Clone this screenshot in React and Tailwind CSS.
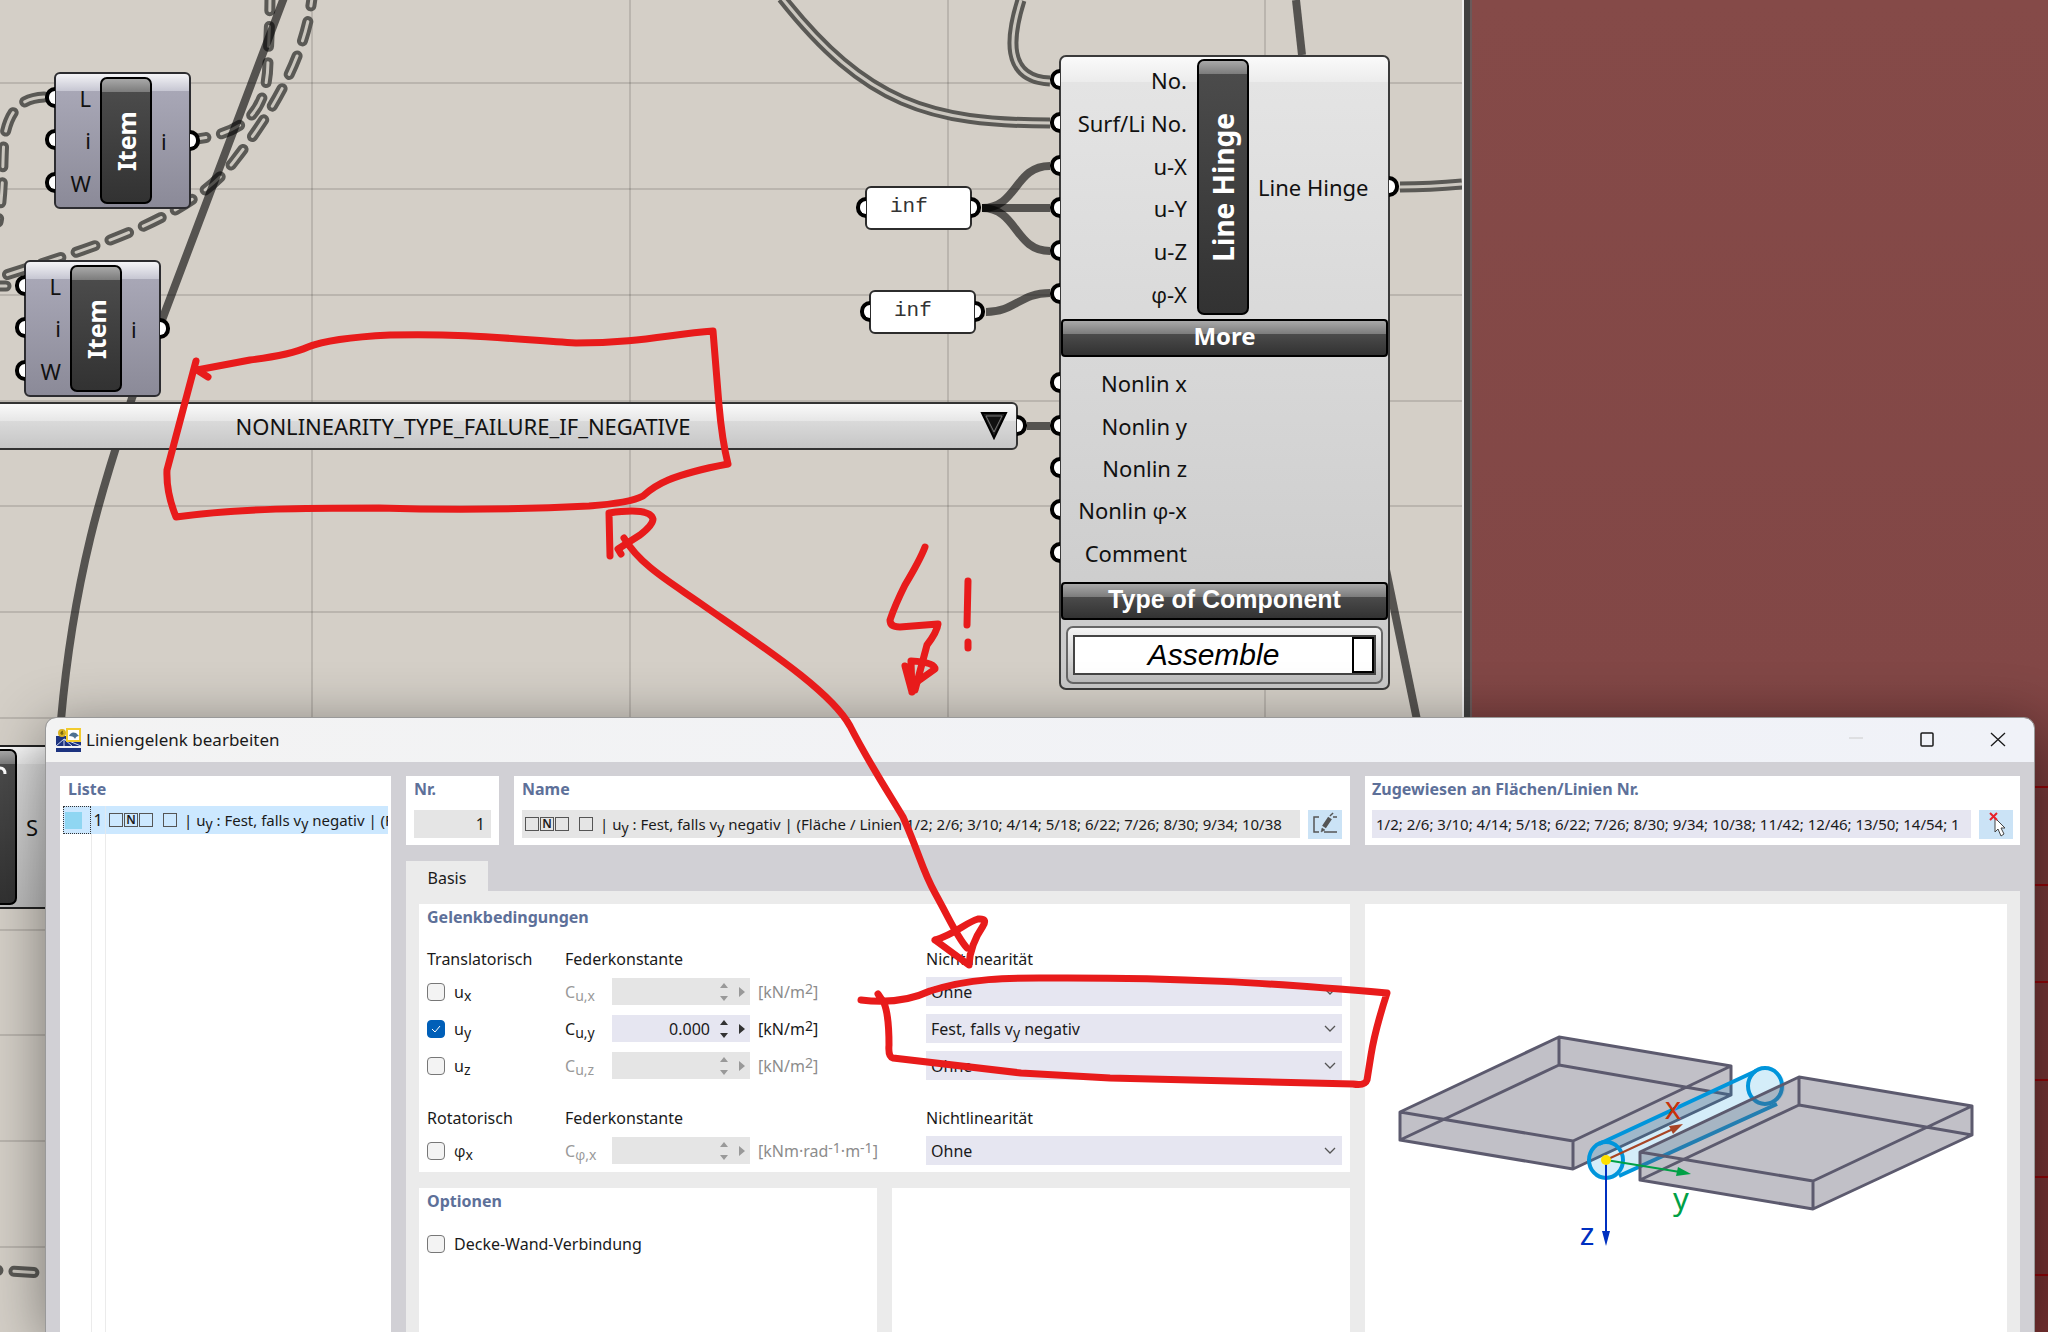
import { useState } from 'react'

const GRID_X = [312, 630, 948, 1265]
const GRID_Y = [83, 189, 295, 401, 506, 612, 718, 824, 930, 1035, 1141, 1247]
const RED_LINES = [786, 884, 981, 1079, 1176, 1274]

const BAR = 'bg-[linear-gradient(180deg,#a8a8a8_0px,#7c7c7c_13px,#4b4b4b_13px,#323232_100%)]'
const GREY = 'bg-[linear-gradient(180deg,#fafafa_0px,#ececec_25px,#e4e4e4_25px,#c9c9c9_100%)]'

// ---------- grasshopper canvas ----------

function Phi() {
  return <span className="font-['Open_Sans',sans-serif]">φ</span>
}

function Port({ side }) {
  const cls = side === 'left'
    ? '-left-[11px] rounded-l-full border-r-0'
    : '-right-[11px] rounded-r-full border-l-0'
  return <span className={`absolute top-1/2 -mt-[11px] h-[21px] w-[10px] border-4 border-black bg-white ${cls}`} />
}

function ItemNode({ className }) {
  return (
    <div className={`absolute flex h-[137px] w-[137px] rounded-[6px] border-2 border-[#2c2c30] bg-[linear-gradient(180deg,#f4f4f7_0px,#c6c6d2_17px,#a8a7b6_17px,#8b8a98_100%)] ${className}`}>
      <div className="flex w-[44px] flex-col py-[3px]">
        {['L', 'i', 'W'].map(p => (
          <div key={p} className="relative flex flex-1 items-center justify-end pr-[9px]">
            <Port side="left" />{p}
          </div>
        ))}
      </div>
      <div className={`my-[3px] flex w-[52px] items-center justify-center rounded-[7px] border-2 border-black ${BAR}`}>
        <span className="rotate-180 text-[25px] font-bold leading-none text-white [writing-mode:vertical-rl]">Item</span>
      </div>
      <div className="relative flex flex-1 items-center pl-[9px]">i<Port side="right" /></div>
    </div>
  )
}

function InfPanel({ className }) {
  return (
    <div className={`absolute flex h-[44px] w-[107px] items-center rounded-[6px] border-2 border-[#2c2c2c] bg-white ${className}`}>
      <Port side="left" />
      <span className="-mt-1 pl-[23px] font-['Liberation_Mono',monospace] text-[21px] text-[#333]">inf</span>
      <Port side="right" />
    </div>
  )
}

function PortRows({ rows, className }) {
  return (
    <div className={`flex flex-col ${className}`}>
      {rows.map((row, i) => (
        <div key={i} className="relative flex flex-1 items-center justify-end">
          <Port side="left" /><span className="whitespace-nowrap">{row}</span>
        </div>
      ))}
    </div>
  )
}

function LineHingeNode() {
  return (
    <div className={`absolute left-[1059px] top-[55px] flex w-[331px] flex-col rounded-[7px] border-2 border-[#3a3a3a] ${GREY}`}>
      <div className="mt-[2px] flex h-[256px]">
        <PortRows rows={['No.', 'Surf/Li No.', 'u-X', 'u-Y', 'u-Z', <><Phi />-X</>]} className="w-[126px]" />
        <div className={`ml-[10px] flex w-[52px] items-center justify-center rounded-[7px] border-2 border-black ${BAR}`}>
          <span className="rotate-180 text-[28px] font-bold leading-none text-white [writing-mode:vertical-rl]">Line Hinge</span>
        </div>
        <div className="relative flex flex-1 items-center pl-[9px]">Line Hinge<Port side="right" /></div>
      </div>
      <div className={`mt-[4px] flex h-[38px] items-center justify-center rounded-[4px] border-2 border-black pb-1 text-[24px] font-bold text-white ${BAR}`}>More</div>
      <PortRows rows={['Nonlin x', 'Nonlin y', 'Nonlin z', <>Nonlin <Phi />-x</>, 'Comment']} className="mt-[5px] h-[212px] w-[126px]" />
      <div className={`mt-[8px] flex h-[38px] items-center justify-center rounded-[4px] border-2 border-black pb-1 font-['Liberation_Sans',sans-serif] text-[25px] font-bold text-white ${BAR}`}>Type of Component</div>
      <div className="mx-[5px] mb-[4px] mt-[6px] rounded-[7px] border-2 border-[#666] bg-[linear-gradient(180deg,#f4f4f4,#bdbdbd)] px-[5px] py-[7px]">
        <button className="flex h-[40px] w-full items-stretch border-2 border-[#444] bg-white font-['Liberation_Sans',sans-serif] text-[30px] italic text-black">
          <span className="flex flex-1 items-center justify-center">Assemble</span>
          <span className="w-[22px] border-2 border-black" />
        </button>
      </div>
    </div>
  )
}

function DoubleWire({ d, dashed }) {
  const dash = dashed ? '20 16' : undefined
  const cap = dashed ? 'round' : 'butt'
  return (
    <>
      <path d={d} stroke="#5a5955" strokeWidth="11" strokeDasharray={dash} strokeLinecap={cap} />
      <path d={d} stroke="#cbc7bf" strokeWidth="3" strokeDasharray={dash} strokeLinecap={cap} />
    </>
  )
}

function Wires() {
  return (
    <svg className="absolute left-0 top-0 h-[1332px] w-[1462px]" viewBox="0 0 1462 1332" fill="none">
      <g stroke="#000" strokeOpacity="0.12" strokeWidth="2">
        {GRID_X.map(x => <path key={x} d={`M${x} 0V1332`} />)}
        {GRID_Y.map(y => <path key={y} d={`M0 ${y}H1462`} />)}
      </g>
      <DoubleWire dashed d="M186 140C240 136 268 116 268 60C269 35 270 20 270 -10" />
      <DoubleWire dashed d="M313 -14C309 60 262 125 235 160C190 220 90 248 0 277" />
      <DoubleWire dashed d="M44 97C20 98 8 112 4 140C2 165 4 190 -2 222" />
      <DoubleWire dashed d="M-14 286H14" />
      <DoubleWire dashed d="M-22 1269L40 1273" />
      <DoubleWire d="M782 -2C866 104 930 123 1050 123" />
      <DoubleWire d="M1021 0C1010 35 1003 79 1050 81" />
      <DoubleWire d="M1400 187Q1430 187 1462 184" />
      <g stroke="#000" strokeOpacity="0.6" strokeWidth="8">
        <path d="M285 -5L162 320L132 398C112 460 75 560 61 720" />
        <path d="M1296 0L1302 55" />
        <path d="M1384 560L1417 720" />
        <path d="M982 208C1018 208 1014 166 1050 166" />
        <path d="M982 208H1050" />
        <path d="M982 208C1018 208 1014 251 1050 251" />
        <path d="M986 312C1015 312 1020 293 1050 293" />
        <path d="M1027 426H1050" />
      </g>
    </svg>
  )
}

function Canvas() {
  return (
    <div className="relative w-[1462px] shrink-0 overflow-hidden bg-[#d4cfc7] text-[22px] leading-none text-[#111]">
      <Wires />
      <ItemNode className="left-[54px] top-[72px]" />
      <ItemNode className="left-[24px] top-[260px]" />
      <InfPanel className="left-[865px] top-[186px]" />
      <InfPanel className="left-[869px] top-[290px]" />

      <button className="absolute left-[-56px] top-[402px] flex h-[48px] w-[1074px] items-center rounded-[6px] border-2 border-[#333] bg-[linear-gradient(180deg,#fafafa_0px,#e6e6e6_17px,#dadada_17px,#c6c6c6_100%)] pr-[8px]">
        <span className="flex-1 text-center">NONLINEARITY_TYPE_FAILURE_IF_NEGATIVE</span>
        <svg className="h-[28px] w-[28px]" viewBox="0 0 28 28">
          <path d="M2 1H26L14 26Z" fill="#222" stroke="#000" strokeWidth="2" />
          <path d="M6 4H22L14 20Z" fill="#111" stroke="#777" strokeWidth="1" />
        </svg>
        <Port side="right" />
      </button>

      <LineHingeNode />

      <div className="absolute left-[-40px] top-[745px] flex h-[164px] w-[140px] items-stretch border-2 border-[#222] bg-[linear-gradient(180deg,#fafafa_0px,#e8e8e8_17px,#dcdcdc_17px,#bdbdbd_100%)]">
        <div className={`my-[2px] w-[55px] rounded-[7px] border-2 border-black ${BAR}`} />
        <span className="flex items-center pl-[9px]">S</span>
      </div>
      <svg className="absolute left-0 top-[762px] h-[20px] w-[8px]" viewBox="0 0 8 20" fill="none">
        <path d="M0 6Q5 6 5 12" stroke="#fff" strokeWidth="3" />
      </svg>
    </div>
  )
}

// ---------- dialog ----------

function AppIcon() {
  return (
    <svg className="h-[24px] w-[25px]" viewBox="0 0 25 24">
      <path d="M0 8H25V18H0ZM0 20H25V24H0Z" fill="#1d3380" />
      <path d="M0 18L8 11L25 18M8 11V18M8 11L16 18" stroke="#cfd8f0" strokeWidth="1" fill="none" />
      <circle cx="6" cy="5" r="4" fill="#d9b320" />
      <path d="M7 3Q4 4 5 6Q7 7 7 5Q6 4 5 5" stroke="#6b5a10" strokeWidth="1" fill="none" />
      <rect x="11" y="1" width="13" height="12" fill="#fff" stroke="#f2cb2e" strokeWidth="2" />
      <path d="M13 8Q15 3 20 5L23 8Q20 8 19 11Q18 8 13 8Z" fill="#4f7191" />
    </svg>
  )
}

function Box({ children }) {
  return <span className="flex h-[14px] w-[14px] shrink-0 items-center justify-center border border-[#555] text-[12px] font-semibold leading-none">{children}</span>
}

function HingeName({ children }) {
  return (
    <span className="flex items-center whitespace-nowrap text-[15px]">
      <span className="flex gap-px"><Box /><Box>N</Box><Box /></span>
      <span className="ml-[10px] mr-[7px]"><Box /></span>
      <span>| u<Sub>y</Sub> : Fest, falls v<Sub>y</Sub> negativ | {children}</span>
    </span>
  )
}

function Sub({ children }) {
  return <sub className="bottom-[-3px] text-[14px]">{children}</sub>
}

function Sup({ children }) {
  return <sup className="top-[-4px] text-[14px]">{children}</sup>
}

function Heading({ children }) {
  return <h2 className="pt-px font-bold text-[#5d7099]">{children}</h2>
}

function CheckRow({ children, defaultChecked = false }) {
  const [on, setOn] = useState(defaultChecked)
  return (
    <label className="flex items-center gap-[9px]">
      <span className="relative flex h-[18px] w-[18px]">
        <input
          type="checkbox"
          checked={on}
          onChange={e => setOn(e.target.checked)}
          className="h-[18px] w-[18px] appearance-none rounded-[4px] border border-[#777] bg-[#f3f3f3] checked:border-[#005fb8] checked:bg-[#005fb8]"
        />
        {on && (
          <svg className="pointer-events-none absolute inset-0" viewBox="0 0 18 18" fill="none" stroke="#fff">
            <path d="M5 9L8 12L13 6" />
          </svg>
        )}
      </span>
      <span>{children}</span>
    </label>
  )
}

function Spin({ value, label, disabled }) {
  return (
    <div className={`flex h-[27px] w-[138px] items-center ${disabled ? 'bg-[#e5e5e5] text-[#999]' : 'bg-[#e6e6f1] text-[#333]'}`}>
      <input aria-label={label} defaultValue={value} disabled={disabled} className="w-[98px] bg-transparent text-right text-[#1a1a1a] outline-none" />
      <svg className="ml-[9px] h-[20px] w-[30px]" viewBox="0 0 30 20" fill="currentColor">
        <path d="M1 6L5 1L9 6ZM1 14L5 19L9 14ZM20 5L26 10L20 15Z" />
      </svg>
    </div>
  )
}

function Select({ value, label, rich }) {
  return (
    <div className="relative h-[29px] w-full bg-[#e6e6f1]">
      <select aria-label={label} className={`h-full w-full appearance-none bg-transparent pl-[5px] outline-none ${rich ? 'text-transparent' : ''}`}>
        <option>{value}</option>
      </select>
      {rich && <span className="pointer-events-none absolute inset-y-0 left-[5px] flex items-center"><span>{rich}</span></span>}
      <svg className="pointer-events-none absolute right-[6px] top-[11px] h-[8px] w-[12px]" viewBox="0 0 12 8" fill="none" stroke="#555">
        <path d="M1 1L6 6L11 1" strokeWidth="1.3" />
      </svg>
    </div>
  )
}

const COLS = 'grid grid-cols-[138px_47px_146px_168px_1fr] items-center'

function ConditionHead({ first }) {
  return (
    <div className={COLS}>
      <span>{first}</span>
      <span className="col-span-3 whitespace-nowrap">Federkonstante</span>
      <span>Nichtlinearität</span>
    </div>
  )
}

function Condition({ sym, axis, unit, value, rich, active }) {
  const glyph = sym === 'φ' ? <Phi /> : sym
  return (
    <div className={`${COLS} h-[29px]`}>
      <CheckRow defaultChecked={active}>{glyph}<Sub>{axis}</Sub></CheckRow>
      <span className={active ? '' : 'text-[#999]'}>C<Sub>{glyph},{axis}</Sub></span>
      <Spin label={`C ${sym},${axis}`} value={active ? '0.000' : ''} disabled={!active} />
      <span className={`whitespace-nowrap ${active ? '' : 'text-[#8c8c8c]'}`}>{unit}</span>
      <Select label={`Nichtlinearität ${sym}${axis}`} value={value} rich={rich} />
    </div>
  )
}

function HingeDrawing() {
  return (
    <svg className="h-[400px] w-[642px]" viewBox="0 0 642 400" strokeLinejoin="round">
      <path d="M194 133L366 162V191L208 265L35 236V208Z" fill="#5c5a6c" fillOpacity="0.38" />
      <path d="M194 133L366 162L208 237L35 208ZM194 161L366 191L208 265L35 236ZM194 133V161M366 162V191M208 237V265M35 208V236" fill="none" stroke="#5c5a6e" strokeWidth="3" />
      <path d="M234 239L391 168A18 18 0 0 1 413 197L255 271A18 18 0 0 1 234 239Z" fill="#0095db" fillOpacity="0.17" />
      <g fill="none" stroke="#0095db" strokeWidth="4">
        <path d="M234 240L391 167M254 272L412 200" />
        <ellipse cx="400" cy="182" rx="17" ry="18" />
        <ellipse cx="241" cy="256" rx="17" ry="18" />
      </g>
      <path d="M434 173L607 202V231L448 305L275 276V248Z" fill="#5c5a6c" fillOpacity="0.38" />
      <path d="M434 173L607 202L448 277L275 248ZM434 201L607 231L448 305L275 276ZM434 173V201M607 202V231M448 277V305M275 248V276" fill="none" stroke="#5c5a6e" strokeWidth="3" />
      <path d="M241 256L308 225" stroke="#a84525" strokeWidth="2" />
      <path d="M318 220L308 230L304 222Z" fill="#a84525" />
      <path d="M241 256L315 268" stroke="#00a046" strokeWidth="2" />
      <path d="M326 270L311 272L313 263Z" fill="#00a046" />
      <path d="M241 256V330" stroke="#0030c0" strokeWidth="2" />
      <path d="M241 342L237 327H245Z" fill="#0030c0" />
      <circle cx="241" cy="256" r="5" fill="#ffe000" />
      <g fontFamily="Noto Sans, sans-serif" fontSize="31" textAnchor="middle">
        <text x="308" y="215" fill="#c8320a">x</text>
        <text x="316" y="306" fill="#00a046">y</text>
        <text x="222" y="341" fill="#0030c0">z</text>
      </g>
    </svg>
  )
}

function TitleBar() {
  return (
    <div className="flex h-[44px] shrink-0 items-center bg-[linear-gradient(90deg,#f3f3f3,#f0f2f8)] pl-[10px] pr-[13px] text-[#1a1a1a]">
      <AppIcon />
      <h1 className="ml-[5px] flex-1 text-[17px]">Liniengelenk bearbeiten</h1>
      <div className="flex gap-[41px] pr-[8px]">
        <button aria-label="Minimieren" className="w-[30px] text-[#ccc]">
          <svg className="mx-auto h-[16px] w-[16px]" viewBox="0 0 16 16" stroke="currentColor"><path d="M1 6H15" /></svg>
        </button>
        <button aria-label="Maximieren" className="w-[30px]">
          <svg className="mx-auto h-[16px] w-[16px]" viewBox="0 0 16 16" fill="none" stroke="currentColor" strokeWidth="1.5"><rect x="2" y="1" width="12" height="13" rx="1" /></svg>
        </button>
        <button aria-label="Schließen" className="w-[30px]">
          <svg className="mx-auto h-[16px] w-[16px]" viewBox="0 0 16 16" stroke="currentColor" strokeWidth="1.3"><path d="M1 1L15 14M15 1L1 14" /></svg>
        </button>
      </div>
    </div>
  )
}

function Dialog() {
  return (
    <section className="absolute bottom-0 left-[46px] right-[14px] top-[718px] flex flex-col overflow-hidden rounded-t-[10px] bg-[#d1d0d5] text-[16px] leading-[24px] text-[#1a1a1a] shadow-[0_10px_60px_rgba(0,0,0,0.45)] outline outline-[#999]">
      <TitleBar />
      <div className="flex flex-1 gap-[15px] pl-[14px] pr-[14px] pt-[14px]">
        <div className="flex w-[331px] shrink-0 flex-col bg-white px-[3px]">
          <div className="px-[5px]"><Heading>Liste</Heading></div>
          <ul className="mt-[5px] flex flex-1 flex-col">
            <li className="flex h-[28px] items-stretch bg-[#cce8ff]">
              <span className="flex w-[28px] shrink-0 items-center border border-dotted border-[#333] pl-px"><span className="h-[17px] w-[17px] bg-[#8fd6f2]" /></span>
              <span className="flex w-[15px] shrink-0 items-center justify-center border-r border-[#e0e8f0]">1</span>
              <span className="flex min-w-0 flex-1 items-center overflow-hidden pl-[3px]"><HingeName>(F</HingeName></span>
            </li>
            <li aria-hidden="true" className="flex flex-1">
              <span className="w-[29px] border-r border-[#ebebeb]" />
              <span className="w-[14px] border-r border-[#ebebeb]" />
            </li>
          </ul>
        </div>

        <div className="flex min-w-0 flex-1 flex-col">
          <div className="flex h-[69px] gap-[15px]">
            <div className="w-[93px] bg-white px-[8px]">
              <Heading><label htmlFor="nr">Nr.</label></Heading>
              <input id="nr" readOnly value="1" className="mt-[9px] block h-[28px] w-full bg-[#e5e5e5] pr-[6px] text-right outline-none" />
            </div>
            <div className="min-w-0 flex-1 bg-white px-[8px]">
              <Heading><label htmlFor="name">Name</label></Heading>
              <div className="mt-[9px] flex gap-[8px]">
                <div className="relative h-[28px] flex-1 overflow-hidden bg-[#e5e5e5]">
                  <input id="name" readOnly className="absolute inset-0 w-full bg-transparent outline-none" />
                  <div className="pointer-events-none absolute inset-0 flex items-center pl-[3px]">
                    <HingeName>(Fläche / Linien 1/2; 2/6; 3/10; 4/14; 5/18; 6/22; 7/26; 8/30; 9/34; 10/38</HingeName>
                  </div>
                </div>
                <button aria-label="Name bearbeiten" className="h-[29px] w-[34px] bg-[#cbe3f6]">
                  <svg className="h-[29px] w-[34px]" viewBox="0 0 34 29" fill="none" stroke="#555" strokeWidth="1.5">
                    <path d="M11 7H6V22H11M16 22H29M25 7H29" />
                    <path d="M22 8L16 17M23 4L24 5" strokeWidth="4.5" stroke="#555" />
                    <path d="M14 18L17 20L13 22Z" fill="#555" strokeWidth="0.5" />
                  </svg>
                </button>
              </div>
            </div>
            <div className="w-[655px] shrink-0 bg-white px-[7px]">
              <Heading><label htmlFor="zug">Zugewiesen an Flächen/Linien Nr.</label></Heading>
              <div className="mt-[9px] flex gap-[8px]">
                <input id="zug" readOnly value="1/2; 2/6; 3/10; 4/14; 5/18; 6/22; 7/26; 8/30; 9/34; 10/38; 11/42; 12/46; 13/50; 14/54; 1" className="h-[28px] min-w-0 flex-1 bg-[#e6e6f1] pl-[4px] text-[15px] outline-none" />
                <button aria-label="Auswählen" className="h-[29px] w-[34px] bg-[#cbe3f6]">
                  <svg className="h-[29px] w-[34px]" viewBox="0 0 34 29">
                    <path d="M16 8V22L19 19L22 26L25 24L22 18H26Z" fill="#fff" stroke="#444" />
                    <path d="M11 3L18 10M18 3L11 10" stroke="#e8202a" strokeWidth="2" />
                  </svg>
                </button>
              </div>
            </div>
          </div>

          <div className="mt-[16px] flex">
            <button className="h-[30px] w-[82px] bg-[#ebebeb] pt-1">Basis</button>
          </div>
          <div className="flex flex-1 gap-[15px] bg-[#ebebeb] px-[13px] pt-[13px]">
            <div className="flex min-w-0 flex-1 flex-col gap-[16px]">
              <div className="h-[268px] bg-white px-[8px]">
                <Heading>Gelenkbedingungen</Heading>
                <div className="mt-[18px]"><ConditionHead first="Translatorisch" /></div>
                <div className="mt-[6px] flex flex-col gap-[8px]">
                  <Condition sym="u" axis="x" unit={<>[kN/m<Sup>2</Sup>]</>} value="Ohne" />
                  <Condition sym="u" axis="y" unit={<>[kN/m<Sup>2</Sup>]</>} value="Fest, falls vy negativ" rich={<>Fest, falls v<Sub>y</Sub> negativ</>} active />
                  <Condition sym="u" axis="z" unit={<>[kN/m<Sup>2</Sup>]</>} value="Ohne" />
                </div>
                <div className="mt-[26px]"><ConditionHead first="Rotatorisch" /></div>
                <div className="mt-[6px]">
                  <Condition sym="φ" axis="x" unit={<>[kNm·rad<Sup>-1</Sup>·m<Sup>-1</Sup>]</>} value="Ohne" />
                </div>
              </div>
              <div className="grid flex-1 grid-cols-2 gap-[15px]">
                <div className="bg-white px-[8px]">
                  <Heading>Optionen</Heading>
                  <div className="mt-[19px]"><CheckRow>Decke-Wand-Verbindung</CheckRow></div>
                </div>
                <div className="bg-white" />
              </div>
            </div>
            <div className="w-[642px] shrink-0 bg-white"><HingeDrawing /></div>
          </div>
        </div>
      </div>
    </section>
  )
}

// red pen marks lying over everything
function PenMarks() {
  return (
    <svg className="pointer-events-none absolute left-0 top-0 h-[1332px] w-[2048px]" viewBox="0 0 2048 1332" fill="none" stroke="#e81b1b" strokeWidth="7" strokeLinecap="round" strokeLinejoin="round">
      <path d="M196 361L167 470Q166 492 176 517C240 508 310 508 379 508C450 510 530 509 589 506Q630 503 643 496C655 485 670 475 728 464Q722 440 719 405L713 331C670 334 640 343 576 343C520 340 470 333 390 335Q330 338 308 347Q290 355 250 360L197 370L208 377" />
      <path d="M610 556L609 513Q650 507 653 519Q653 525 640 535L618 549L621 554" />
      <path d="M624 538C640 565 670 582 700 603C760 645 830 690 850 726C870 765 890 795 903 817C920 855 922 870 935 893C950 920 957 937 967 948" />
      <path d="M935 940C955 934 965 923 978 919Q988 918 983 926Q970 945 969 965L935 940" />
      <path d="M861 1000Q900 1005 930 991C970 978 1010 978 1039 978C1180 977 1270 983 1387 993Q1375 1030 1371 1055L1367 1080Q1365 1086 1353 1084L1110 1078L1021 1073L893 1058Q888 1057 889 1045Q889 1015 884 1003L878 994" />
      <path d="M925 547Q920 560 905 585Q895 605 890 620Q890 627 900 627L938 624Q937 632 927 645L915 690" />
      <path d="M905 666L912 692L911 661Q935 662 935 669L914 684L912 692" />
      <path d="M968 581L967 625M968 642L968 648" />
    </svg>
  )
}

export default function App() {
  return (
    <main className="relative flex h-screen w-full overflow-hidden font-['Noto_Sans',sans-serif]">
      <Canvas />
      <div className="w-[10px] shrink-0 border-l-2 border-r-2 border-l-[#eee] border-r-[#6a5a5a] bg-[#404040]" />
      <div className="relative flex-1 bg-[linear-gradient(180deg,#854a48_0px,#824746_680px,#753838_800px,#753030_100%)]">
        {RED_LINES.map(y => (
          <div key={y} className="absolute inset-x-0 h-[2px] bg-[#8f0508]" style={{ top: y }} />
        ))}
      </div>
      <Dialog />
      <PenMarks />
    </main>
  )
}
